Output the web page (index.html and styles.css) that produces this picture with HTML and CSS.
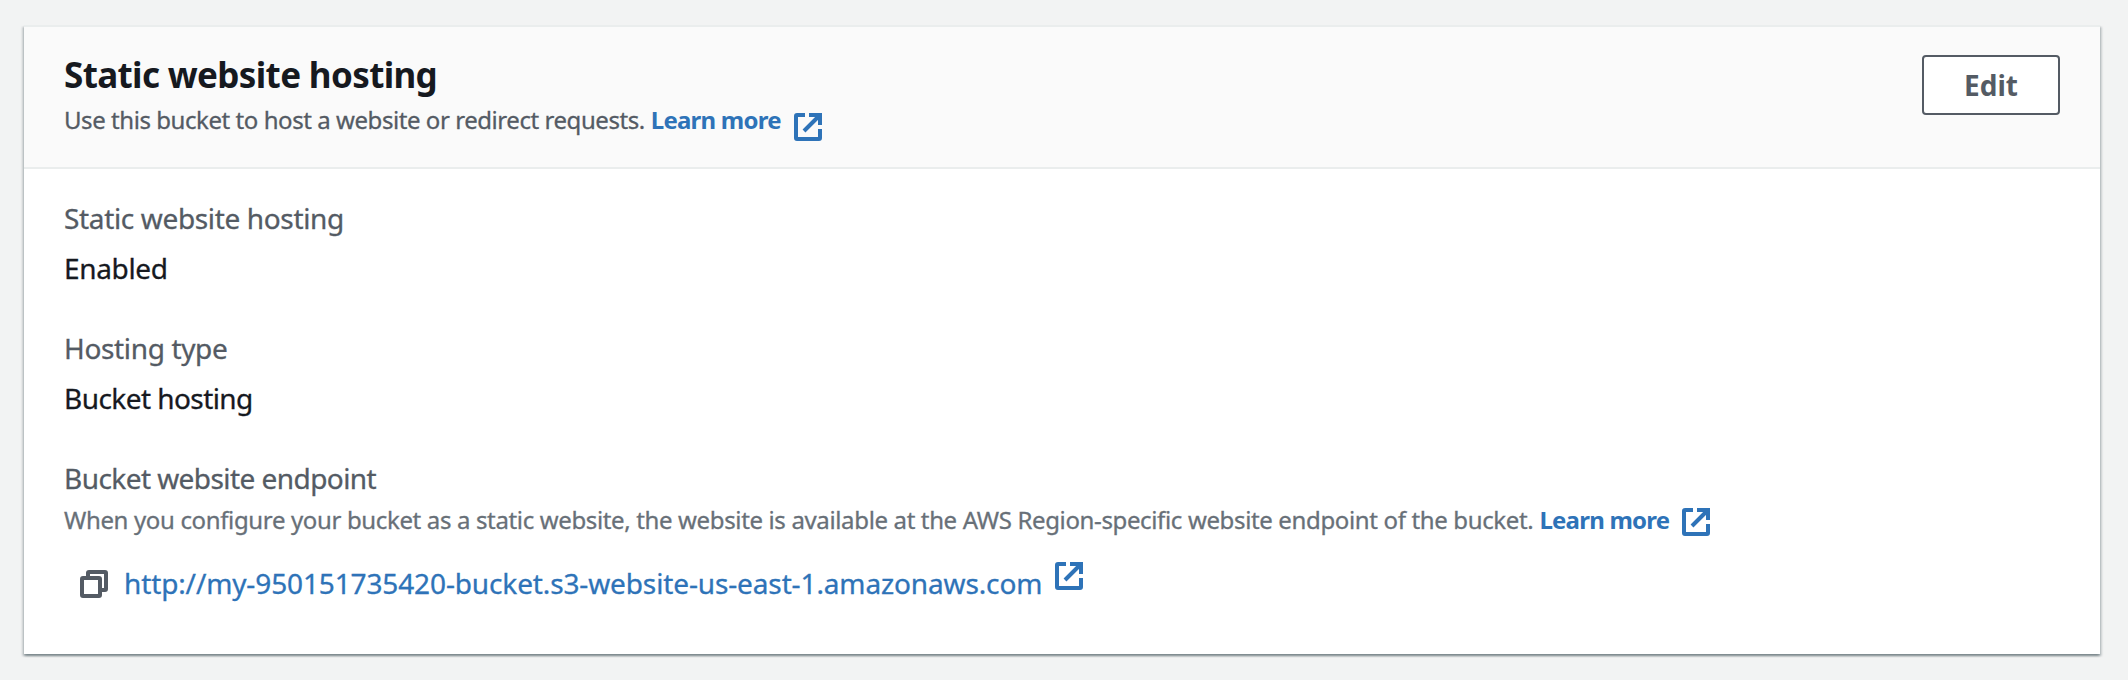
FILE: index.html
```html
<!DOCTYPE html>
<html lang="en">
<head>
<meta charset="utf-8">
<title>Static website hosting</title>
<link rel="stylesheet" href="styles.css">
</head>
<body>
<svg class="defs" width="0" height="0" aria-hidden="true">
  <symbol id="external" viewBox="0 0 28 28"><path d="M11 2H3Q2 2 2 3V25Q2 26 3 26H25Q26 26 26 25V16M15 2H26V12M26 2L10 18" fill="none" stroke="currentColor" stroke-width="4"/></symbol>
</svg>
<main class="card">
  <header class="card-header">
    <div>
      <h2 class="title">Static website hosting</h2>
      <p class="description intro"><span>Use this bucket to host a website or redirect requests.</span><a class="learn" href="#"><span>Learn more</span><svg class="icon icon-low"><use href="#external"/></svg></a></p>
    </div>
    <button class="edit">Edit</button>
  </header>
  <section class="card-body">
    <div class="field"><div class="label">Static website hosting</div><div class="value">Enabled</div></div>
    <div class="field"><div class="label">Hosting type</div><div class="value value-tight">Bucket hosting</div></div>
    <div class="field">
      <div class="label label-tight">Bucket website endpoint</div>
      <p class="description hint"><span>When you configure your bucket as a static website, the website is available at the AWS Region-specific website endpoint of the bucket.</span><a class="learn" href="#"><span>Learn more</span><svg class="icon"><use href="#external"/></svg></a></p>
      <div class="endpoint">
        <svg class="copy" viewBox="0 0 28 28"><path d="M3 8H19Q20 8 20 9V25Q20 26 19 26H3Q2 26 2 25V9Q2 8 3 8ZM8 8V3Q8 2 9 2H25Q26 2 26 3V19Q26 20 25 20H20" fill="none" stroke="currentColor" stroke-width="4"/></svg>
        <a class="url" href="#"><span>http://my-950151735420-bucket.s3-website-us-east-1.amazonaws.com</span><svg class="icon icon-high"><use href="#external"/></svg></a>
      </div>
    </div>
  </section>
</main>
</body>
</html>
```

FILE: styles.css
```css
* { box-sizing: border-box; }
body { margin: 0; height: 680px; padding: 25px 28px 0 24px; background: #f2f3f3; font-family: "Noto Sans", sans-serif; color: #16191f; overflow: hidden; }
h2, p { margin: 0; }
a { color: #2e73b8; text-decoration: none; }
.defs { position: absolute; }
.card { height: 629px; background: #fff; border-top: 2px solid #eaeded; box-shadow: 0 2px 2px rgba(0, 28, 36, .3), 2px 2px 2px rgba(0, 28, 36, .15), -2px 2px 2px rgba(0, 28, 36, .15); }
.card-header { display: flex; justify-content: space-between; height: 142px; padding: 26px 40px 0; background: #fafafa; border-bottom: 2px solid #eaeded; }
.title { font-size: 35px; line-height: 44px; font-weight: 700; letter-spacing: -.64px; }
.description { display: flex; font-size: 24px; line-height: 40px; white-space: nowrap; -webkit-text-stroke: .3px currentColor; }
.intro { margin-top: 3px; color: #545b64; letter-spacing: -.44px; }
.learn { display: flex; margin-left: 6px; font-weight: 700; letter-spacing: -.77px; -webkit-text-stroke: 0; }
.icon { width: 28px; height: 28px; margin: 8px 0 0 13px; }
.icon-low { margin-top: 13px; }
.icon-high { margin: 1px 0 0 13px; }
.edit { width: 138px; height: 60px; margin-top: 2px; border: 2px solid #545b64; border-radius: 4px; background: #fff; color: #545b64; font: 700 28px/40px "Noto Sans", sans-serif; }
.card-body { display: grid; gap: 36px; padding: 27px 40px; }
.label, .value { font-size: 28px; line-height: 44px; letter-spacing: -.35px; -webkit-text-stroke: .3px currentColor; }
.label { color: #545b64; }
.value { margin-top: 6px; }
.value-tight, .label-tight { letter-spacing: -.56px; }
.hint { color: #687078; letter-spacing: -.355px; }
.endpoint { display: flex; margin: 21px 0 0 16px; font-size: 28px; line-height: 44px; }
.copy { width: 28px; height: 28px; margin-top: 9px; color: #545b64; }
.url { display: flex; margin-left: 16px; letter-spacing: -.13px; -webkit-text-stroke: .3px currentColor; }
```
